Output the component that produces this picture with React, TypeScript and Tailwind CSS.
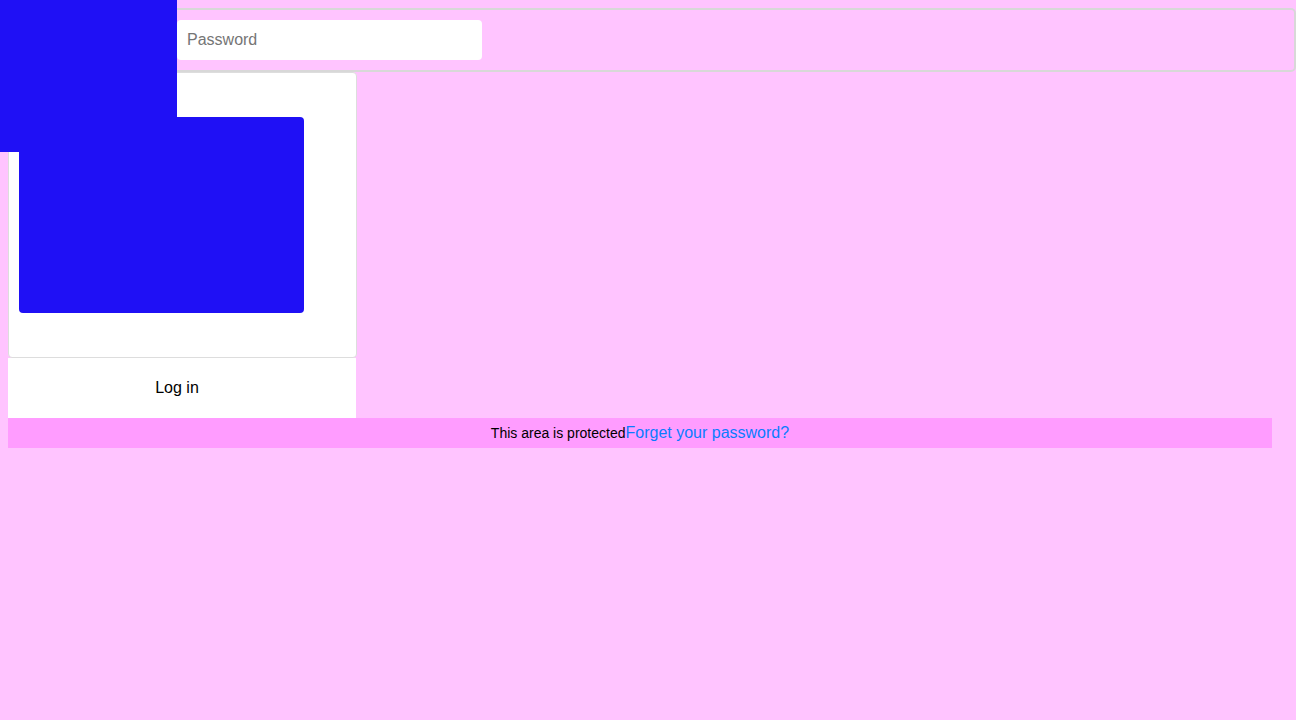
import React from "react";

export default function App() {
  return (
    <div
      className="relative min-h-[720px] w-[1296px] bg-[#ffc4ff]"
      style={{ fontFamily: '"Liberation Sans", Arial, sans-serif' }}
    >
      <div className="absolute left-0 top-0 h-[152px] w-[177px] bg-[#1f10f5]" />
      <div className="pt-[8px]">
        <div className="flex h-[64px] w-[1296px] items-center rounded-[5px] border-2 border-[#d8d8d8] pl-[175px]">
          <input
            type="password"
            placeholder="Password"
            className="h-[40px] w-[305px] rounded-[4px] bg-white px-[10px] text-[16px] text-black outline-none placeholder:text-[#757575]"
          />
        </div>
      </div>
      <div className="pl-[8px]">
        <div className="h-[286px] w-[349px] rounded-[4px] border border-[#dddddd] bg-white pl-[10px] pt-[44px]">
          <div className="h-[196px] w-[285px] rounded-[4px] bg-[#1f10f5]" />
        </div>
        <button className="flex h-[60px] w-[348px] items-center justify-center bg-white pr-[10px] text-[16px] text-black">
          Log in
        </button>
        <div className="flex h-[30px] w-[1264px] items-center justify-center bg-[#ff9cff]">
          <span className="text-[14px] text-black">This area is protected</span>
          <a className="text-[16px] text-[#0a7cff]">Forget your password?</a>
        </div>
      </div>
    </div>
  );
}
